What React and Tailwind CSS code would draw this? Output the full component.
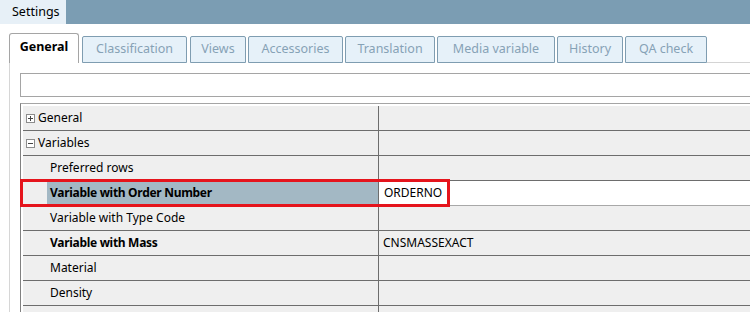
import React from "react";

const tabs = [
  { label: "Classification", w: "w-[105px] ml-[3px]" },
  { label: "Views", w: "w-[56px] ml-[3px]" },
  { label: "Accessories", w: "w-[95px] ml-[2px]" },
  { label: "Translation", w: "w-[90px] ml-[2px]" },
  { label: "Media variable", w: "w-[118px] ml-[2px]" },
  { label: "History", w: "w-[66px] ml-[2px]" },
  { label: "QA check", w: "w-[82px] ml-[2px]" },
];

function BoxIcon({ plus }) {
  return (
    <svg width="9" height="9" viewBox="0 0 9 9" className="shrink-0">
      <rect x="0.5" y="0.5" width="8" height="8" fill="#fff" stroke="#8c8c8c" />
      <line x1="2" y1="4.5" x2="7" y2="4.5" stroke="#444" />
      {plus && <line x1="4.5" y1="2" x2="4.5" y2="7" stroke="#444" />}
    </svg>
  );
}

function CategoryRow({ label, plus }) {
  return (
    <div className="flex h-[25px] border-b border-[#6d6d6d] bg-[#efefef]">
      <div className="flex w-[355px] items-center pl-[3px]">
        <BoxIcon plus={plus} />
        <span className="ml-[3px]">{label}</span>
      </div>
      <div className="flex-1 border-l border-[#6d6d6d]" />
    </div>
  );
}

function PropRow({ label, value, bold, selected }) {
  return (
    <div
      className={
        selected
          ? "flex h-[25px] border-b border-[#a8a8a8]"
          : "flex h-[25px] border-b border-[#6d6d6d]"
      }
    >
      <div className="w-[24px] bg-[#efefef]" />
      <div
        className={
          selected
            ? "flex w-[331px] items-center bg-[#a3b8c4] pl-[3px] font-bold tracking-[-0.3px]"
            : bold
            ? "flex w-[331px] items-center bg-[#efefef] pl-[3px] font-bold tracking-[-0.3px]"
            : "flex w-[331px] items-center bg-[#efefef] pl-[3px]"
        }
      >
        {label}
      </div>
      <div
        className={
          selected
            ? "flex flex-1 items-center border-l border-[#6d6d6d] bg-white pl-[5px]"
            : "flex flex-1 items-center border-l border-[#6d6d6d] bg-[#efefef] pl-[4px]"
        }
      >
        {value}
      </div>
    </div>
  );
}

export default function App() {
  return (
    <div
      className="h-[312px] w-[750px] overflow-hidden bg-white text-[12px] leading-none text-black"
      style={{ fontFamily: '"Noto Sans", "Open Sans", sans-serif' }}
    >
      {/* top bar */}
      <div className="flex h-[24px] bg-[#7b9db3]">
        <div className="flex w-[66px] items-center bg-[#e7f0f7] pl-[12px] text-[12.5px]">
          Settings
        </div>
      </div>

      {/* tabs */}
      <div className="flex h-[39px] items-end pl-[9px]">
        <div className="flex h-[30px] w-[70px] items-center justify-center rounded-t-[3px] border border-b-0 border-[#a5a5a5] bg-white pb-[2px] text-[12.5px] font-bold">
          General
        </div>
        {tabs.map((t) => (
          <div
            key={t.label}
            className={
              "flex h-[27px] items-center justify-center rounded-t-[2px] border border-[#7f9db1] bg-[#e6f1f9] text-[12.5px] text-[#86a2b6] " +
              t.w
            }
          >
            {t.label}
          </div>
        ))}
        <div className="h-px flex-1 bg-[#d4d4d4]" />
      </div>

      {/* panel */}
      <div className="ml-[9px] h-[300px] border-l border-[#d6d6d6] pl-[10px] pt-[10px]">
        <div className="h-[24px] border border-r-0 border-[#a5a5a5] bg-white" />
        <div className="relative mt-[6px] border-l border-t border-l-[#808080] border-t-[#a5a5a5] pl-[2px] pt-[2px]">
          <CategoryRow label="General" plus />
          <CategoryRow label="Variables" />
          <PropRow label="Preferred rows" />
          <PropRow label="Variable with Order Number" value="ORDERNO" selected />
          <PropRow label="Variable with Type Code" />
          <PropRow label="Variable with Mass" value="CNSMASSEXACT" bold />
          <PropRow label="Material" />
          <PropRow label="Density" />
          <PropRow label="" />
          <div className="absolute left-[-1px] top-[75px] h-[28px] w-[430px] border-[3px] border-[#e5141c]" />
        </div>
      </div>
    </div>
  );
}
